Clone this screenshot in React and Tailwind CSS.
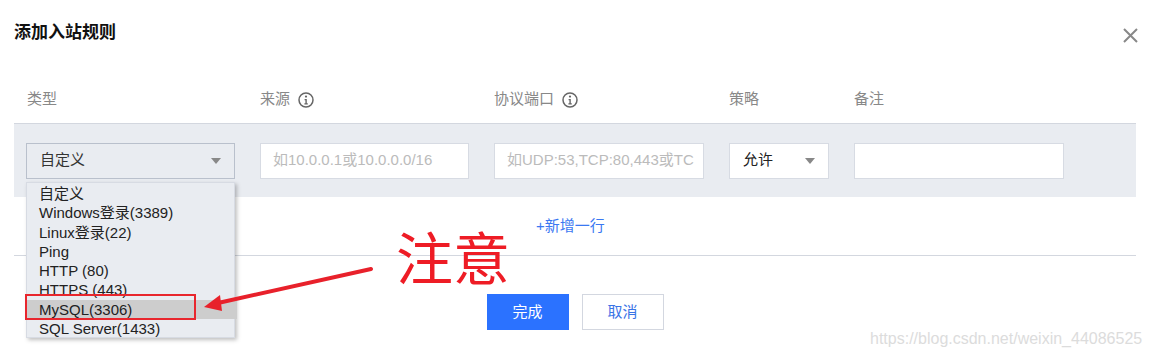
import React from 'react';

const font = { fontFamily: '"Liberation Sans", "Noto Sans CJK SC", sans-serif' };

function InfoIcon() {
	return (
		<svg width="16" height="16" viewBox="0 0 16 16" className="ml-[8px]">
			<circle cx="8" cy="8" r="7" fill="none" stroke="#666" strokeWidth="1.5" />
			<circle cx="8" cy="4.6" r="1.1" fill="#666" />
			<path d="M6.6 7h2.2v4.3h1v1.2H6.4v-1.2h1V8.2h-.8z" fill="#666" />
		</svg>
	);
}

function Caret() {
	return (
		<svg width="10" height="6" viewBox="0 0 10 6">
			<path d="M0 0h10L5 6z" fill="#888" />
		</svg>
	);
}

const options = [
	'自定义',
	'Windows登录(3389)',
	'Linux登录(22)',
	'Ping',
	'HTTP (80)',
	'HTTPS (443)',
	'MySQL(3306)',
	'SQL Server(1433)',
];

export default function App() {
	return (
		<div
			className="relative w-[1150px] h-[354px] bg-white overflow-hidden text-[15px]"
			style={font}
		>
			{/* title */}
			<div className="h-[76px] px-[14px] pt-[22px]">
				<h1 className="text-[17px] leading-[22px] font-bold text-[#111]">添加入站规则</h1>
			</div>
			<button className="absolute left-[1122px] top-[27px] w-[17px] h-[17px]">
				<svg width="17" height="17" viewBox="0 0 17 17">
					<path d="M2 2l13 13M15 2L2 15" stroke="#888" strokeWidth="2" />
				</svg>
			</button>

			<div className="mx-[14px]">
				{/* header */}
				<div className="flex items-center h-[48px] pl-[12px] border-b border-[#d3d7df] text-[#888]">
					<div className="w-[234px] pl-[1px]">类型</div>
					<div className="w-[234px] flex items-center">
						来源
						<InfoIcon />
					</div>
					<div className="w-[235px] flex items-center">
						协议端口
						<InfoIcon />
					</div>
					<div className="w-[125px]">策略</div>
					<div>备注</div>
				</div>

				{/* rule row */}
				<div className="flex items-center h-[73px] pl-[12px] bg-[#e9ecf1]">
					<div className="w-[234px]">
						<div className="w-[209px] h-[36px] border border-[#b9c0cc] flex items-center justify-between pl-[13px] pr-[13px] text-[#333]">
							<span>自定义</span>
							<Caret />
						</div>
					</div>
					<div className="w-[234px]">
						<div className="w-[209px] h-[36px] border border-[#d7dbe3] bg-white flex items-center pl-[12px] text-[#bbb] overflow-hidden whitespace-nowrap">
							如10.0.0.1或10.0.0.0/16
						</div>
					</div>
					<div className="w-[235px]">
						<div className="w-[210px] h-[36px] border border-[#d7dbe3] bg-white flex items-center pl-[12px] text-[#bbb] overflow-hidden whitespace-nowrap">
							如UDP:53,TCP:80,443或TC
						</div>
					</div>
					<div className="w-[125px]">
						<div className="w-[100px] h-[36px] border border-[#d7dbe3] bg-white flex items-center justify-between pl-[13px] pr-[13px] text-[#222]">
							<span>允许</span>
							<Caret />
						</div>
					</div>
					<div className="w-[210px] h-[36px] border border-[#d7dbe3] bg-white" />
				</div>

				{/* add row */}
				<div className="h-[58px] flex items-center pl-[522px] text-[#3a78f2]">+新增一行</div>

				{/* footer */}
				<div className="border-t border-[#d3d7df] pt-[38px] flex justify-center gap-[13px]">
					<button className="w-[82px] h-[36px] bg-[#2b72ff] text-white">完成</button>
					<button className="w-[82px] h-[36px] border border-[#d3d7e0] bg-white text-[#3a74e6]">取消</button>
				</div>
			</div>

			{/* open dropdown */}
			<div className="absolute left-[26px] top-[182px] w-[209px] h-[156px] bg-[#e9ecf1] border border-[#d7dbe3] shadow-[2px_2px_4px_rgba(0,0,0,0.25)] pt-[1px]">
				{options.map((o) => (
					<div
						key={o}
						className={`h-[19.3px] leading-[19px] pl-[12px] text-[15px] text-[#222] whitespace-nowrap ${
							o === 'MySQL(3306)' ? 'bg-[#cdcdcd] -mr-[3px]' : ''
						}`}
					>
						{o}
					</div>
				))}
			</div>

			{/* annotation */}
			<div className="absolute left-[25px] top-[294px] w-[171px] h-[26px] border-2 border-[#e8262d]" />
			<svg className="absolute left-0 top-0" width="1150" height="354" viewBox="0 0 1150 354">
				<line x1="371" y1="269" x2="218" y2="303" stroke="#e8212b" strokeWidth="4" strokeLinecap="round" />
				<path d="M204 307l16-12 2 16z" fill="#e8212b" />
			</svg>
			<div
				className="absolute left-[396px] top-[219px] text-[57px] leading-[72px] text-[#ee1c25]"
				style={{ fontFamily: '"Noto Sans CJK SC", sans-serif' }}
			>
				注意
			</div>

			<div className="absolute left-[870px] top-[327px] text-[16px] text-[#dcdcdc] whitespace-nowrap">
				https://blog.csdn.net/weixin_44086525
			</div>
		</div>
	);
}
